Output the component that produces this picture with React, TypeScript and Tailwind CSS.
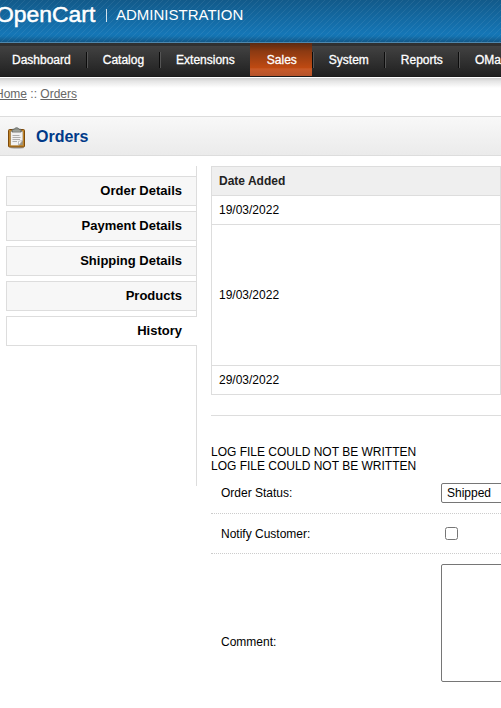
import clsx from "clsx";

const menu = ["Dashboard", "Catalog", "Extensions", "Sales", "System", "Reports", "OMail"];

const tabs = ["Order Details", "Payment Details", "Shipping Details", "Products", "History"];

const history = [
  { date: "19/03/2022", height: "h-[29px]" },
  { date: "19/03/2022", height: "h-[141px]" },
  { date: "29/03/2022", height: "h-[29px]" },
];

function ClipboardIcon() {
  return (
    <svg width="20" height="22" viewBox="0 0 20 22" className="mt-[3px] shrink-0">
      <ellipse cx="10" cy="20.8" rx="7" ry="1" fill="#000" opacity="0.25" />
      <rect x="1.5" y="2.5" width="16" height="17.5" rx="1" fill="#c08429" stroke="#7d4a0a" />
      <path d="M3.5 4.2h12.3v14H3.5z" fill="#9a9384" />
      <path d="M4 4.5h11.5v9.3l-3.8 4.4H4z" fill="#f1f1f1" />
      <path d="M15.5 13.5l-4 4.8v-3.9z" fill="#fff" stroke="#999" strokeWidth="0.6" />
      <path d="M5.5 8.5h7M5.5 10.5h8M5.5 12.5h7.5M5.5 14.5h4.5" stroke="#a6a6a6" strokeWidth="0.9" />
      <path d="M5 5V3.2q0-1 1-1h1.2Q7.8.7 9.6.7t2.4 1.5h1.2q1 0 1 1V5z" fill="#8d918b" stroke="#5f625d" strokeWidth="0.8" />
      <path d="M6 4h7" stroke="#b9bdb6" strokeWidth="0.7" />
    </svg>
  );
}

function Header() {
  return (
    <header className="h-[43px] border-b border-[#4f88ae] bg-[repeating-linear-gradient(135deg,rgba(255,255,255,0.07)_0px,rgba(255,255,255,0.07)_1px,transparent_1px,transparent_4.243px),linear-gradient(to_bottom,#125a8a_0%,#1576b6_80%,#1473b1_86%,#125888_100%)]">
      <div className="flex h-[30px] items-center text-white">
        <span className="-mt-[3px] -ml-[4px] w-[101px] text-[22.9px] leading-[30px] [-webkit-text-stroke:0.5px_white]">
          OpenCart
        </span>
        <span className="ml-[9px] h-[13px] w-px bg-white/80" />
        <span className="ml-[9px] text-[15px]">ADMINISTRATION</span>
      </div>
    </header>
  );
}

function Menu() {
  return (
    <nav className="relative h-[34px] border-b border-[#1b1b1b] bg-[linear-gradient(to_bottom,#303030_0px,#303030_3px,#424242_3px,#202020_100%)]">
      <ul className="-ml-[3px] flex h-[33px] w-[700px]">
        {menu.map((item) => (
          <li key={item} className="flex shrink-0">
            <a
              className={clsx(
                "block px-[15px] pt-[10px] text-xs leading-[15px] text-white [-webkit-text-stroke:0.3px_white]",
                item === "Sales" &&
                  "-ml-0.5 bg-[linear-gradient(to_bottom,#5b2a12_0%,#8c3a12_25%,#c04a12_76%,#c85a28_78%,#b5532a_100%)] pl-[17px]",
              )}
            >
              {item}
            </a>
            <span className="mt-[9px] h-4 w-0.5 border-l border-[#0c0c0c] bg-[#555]" />
          </li>
        ))}
      </ul>
    </nav>
  );
}

function Sidebar() {
  return (
    <div className="flex h-[320px] w-[191px] shrink-0 flex-col gap-[5px] border-r border-[#ddd] pt-[10px]">
      {tabs.map((tab) => (
        <a
          key={tab}
          className={clsx(
            "h-[30px] border border-r-0 border-[#ddd] text-right text-[13px] leading-[28px] font-bold text-black",
            tab === "History" ? "relative -mr-px bg-white pr-[15px]" : "bg-[#f7f7f7] pr-[14px]",
          )}
        >
          {tab}
        </a>
      ))}
    </div>
  );
}

function HistoryPanel() {
  return (
    <div className="ml-[14px] w-[290px] shrink-0">
      <div className="border border-[#ddd]">
        <div className="h-7 bg-[#efefef] pl-[7px] text-xs leading-[28px] font-bold text-[#222]">
          Date Added
        </div>
        {history.map((row, i) => (
          <div
            key={i}
            className={clsx("flex items-center border-t border-[#ddd] pl-[7px]", row.height)}
          >
            {row.date}
          </div>
        ))}
      </div>
      <div className="mt-5 border-t border-[#ddd] pt-[29px] leading-[14px]">
        <p>LOG FILE COULD NOT BE WRITTEN</p>
        <p>LOG FILE COULD NOT BE WRITTEN</p>
      </div>
      <form className="w-[500px]">
        <div className="flex h-[41px] items-center border-b border-dotted border-[#ccc]">
          <label className="w-[230px] pl-[10px]">Order Status:</label>
          <select className="h-5 w-[130px] appearance-none rounded-xs border border-[#767676] bg-white pl-[5px] leading-[18px]">
            <option>Shipped</option>
          </select>
        </div>
        <div className="flex h-10 items-center border-b border-dotted border-[#ccc]">
          <label className="w-[230px] pl-[10px]">Notify Customer:</label>
          <input type="checkbox" className="ml-1 size-[13px]" />
        </div>
        <div className="flex h-[138px] items-center">
          <label className="w-[230px] pt-[37px] pl-[10px]">Comment:</label>
          <textarea className="h-[118px] w-[260px] resize-none rounded-xs border border-[#767676] bg-white" />
        </div>
      </form>
    </div>
  );
}

export default function App() {
  return (
    <div className="h-[708px] w-[501px] overflow-hidden bg-white font-['Liberation_Sans',Arial,sans-serif] text-xs text-black">
      <Header />
      <Menu />
      <div className="mt-px h-[38px] bg-[linear-gradient(to_bottom,#cccccc_0px,#e4e4e4_3px,#ffffff_10px)] pt-[9px] leading-[14px] text-[#666]">
        <div className="-ml-[5px]">
          <a className="underline">Home</a> :: <a className="underline">Orders</a>
        </div>
      </div>
      <div className="flex h-10 items-center border-y border-[#ddd] bg-linear-to-b from-[#f8f8f8] to-[#ebebeb] pl-[7px]">
        <ClipboardIcon />
        <h1 className="mt-px ml-[9px] text-base leading-5 font-bold text-[#003a88]">Orders</h1>
      </div>
      <div className="flex pt-[10px] pl-[6px]">
        <Sidebar />
        <HistoryPanel />
      </div>
    </div>
  );
}
